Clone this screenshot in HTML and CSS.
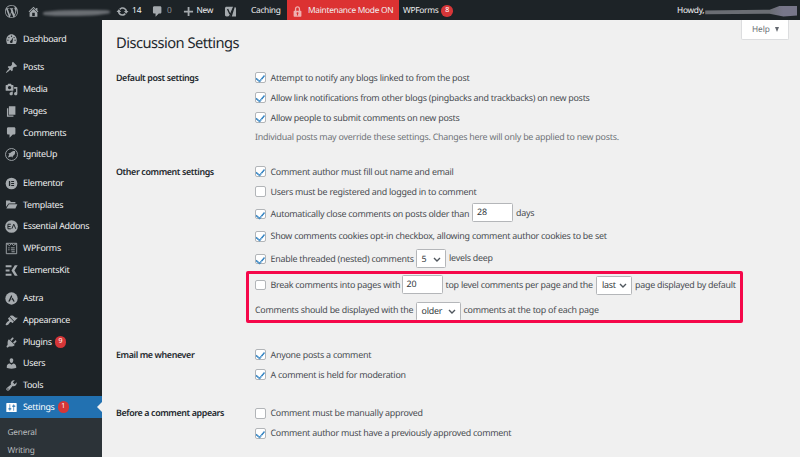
FILE: index.html
```
<!DOCTYPE html>
<html lang="en">
<head>
<meta charset="utf-8">
<title>Discussion Settings</title>
<link rel="stylesheet" href="styles.css">
</head>
<body>
<header class="bar">
  <span class="bi b-wp"><svg class="ic" viewBox="0 0 20 20"><path d="M20 10c0-5.51-4.49-10-10-10C4.48 0 0 4.49 0 10c0 5.52 4.48 10 10 10 5.51 0 10-4.48 10-10zM7.78 15.37L4.37 6.22c.55-.02 1.17-.08 1.17-.08.5-.06.44-1.13-.06-1.11 0 0-1.45.11-2.37.11-.18 0-.37 0-.58-.01C4.12 2.69 6.87 1.11 10 1.11c2.33 0 4.45.87 6.05 2.34-.68-.11-1.65.39-1.65 1.58 0 .74.45 1.36.9 2.1.35.61.55 1.36.55 2.46 0 1.49-1.4 5-1.4 5l-3.03-8.37c.54-.02.82-.17.82-.17.5-.05.44-1.25-.06-1.22 0 0-1.44.12-2.38.12-.87 0-2.33-.12-2.33-.12-.5-.03-.56 1.2-.06 1.22l.92.08 1.26 3.41zM17.41 10c.24-.64.74-1.87.43-4.25.7 1.29 1.05 2.71 1.05 4.25 0 3.29-1.73 6.24-4.4 7.78.97-2.59 1.94-5.2 2.92-7.78zM6.1 18.09C3.12 16.65 1.11 13.53 1.11 10c0-1.3.23-2.48.72-3.59C3.25 10.3 4.67 14.2 6.1 18.09zm4.03-6.63l2.58 6.98c-.86.29-1.76.45-2.71.45-.79 0-1.57-.11-2.29-.33.81-2.38 1.62-4.74 2.42-7.1z"/></svg></span>
  <span class="bi b-site"><svg class="ic" viewBox="0 0 20 20"><path d="M16 8.5l1.53 1.53-1.06 1.06L10 4.6l-6.47 6.49-1.06-1.06L10 2.5l4 4v-2h2v4zm-6-2.46l6 5.99V18H4v-5.97zM12 17v-5H8v5h4z"/></svg><i class="smear"></i></span>
  <span class="bi b-upd"><svg class="ic" viewBox="0 0 20 20"><path d="M10.2 3.28c3.53 0 6.43 2.61 6.92 6h2.08l-3.5 4-3.5-4h2.32c-.45-1.97-2.21-3.45-4.32-3.45-1.45 0-2.73.71-3.54 1.78L4.95 5.66C6.23 4.2 8.11 3.28 10.2 3.28zm-.4 13.44c-3.52 0-6.43-2.61-6.92-6H.8l3.5-4c1.17 1.33 2.33 2.67 3.5 4H5.48c.45 1.97 2.21 3.45 4.32 3.45 1.45 0 2.73-.71 3.54-1.78l1.71 1.95c-1.28 1.46-3.15 2.38-5.25 2.38z"/></svg><span>14</span></span>
  <span class="bi b-com"><svg class="ic" viewBox="0 0 20 20"><path d="M5 2h9c1.1 0 2 .9 2 2v7c0 1.1-.9 2-2 2h-2l-5 5v-5H5c-1.1 0-2-.9-2-2V4c0-1.1.9-2 2-2z"/></svg><span class="zero">0</span></span>
  <span class="bi b-new"><svg class="ic" viewBox="0 0 20 20"><path d="M8.7 3h2.8v5.7H17v2.8h-5.500V17H8.700v-5.500H3V8.700h5.700z"/></svg><span>New</span></span>
  <span class="bi b-yoast"><svg class="ic" viewBox="0 0 20 20"><path d="M4 2.500h10.500L9.500 17.500H4c-1.600 0-2.500-1-2.500-2.500V5C1.500 3.400 2.500 2.500 4 2.500zM16.500 3c1.300.3 2 1.200 2 2.500v12H12z"/><path class="yy" d="M5.500 6l3.500 8M16 .5L9 16.500c-.8 1.800-1.600 2.500-3.500 2.500"/></svg></span>
  <span class="bi b-cache">Caching</span>
  <span class="bi b-maint"><svg class="ic" viewBox="0 0 20 20"><path d="M14 9h1c.55 0 1 .45 1 1v7c0 .55-.45 1-1 1H5c-.55 0-1-.45-1-1v-7c0-.55.45-1 1-1h1V6c0-2.210 1.790-4 4-4s4 1.790 4 4v3zm-2 0V6c0-1.100-.9-2-2-2s-2 .9-2 2v3h4zm-1 7l-.36-2.150c.51-.24.86-.75.86-1.350 0-.83-.67-1.500-1.500-1.500s-1.500.67-1.500 1.500c0 .6.35 1.110.86 1.350L9 16h2z"/></svg><span>Maintenance Mode ON</span></span>
  <span class="bi b-forms">WPForms<b class="badge">8</b></span>
  <span class="bi b-howdy">Howdy,<i class="smear me"></i></span>
</header>
<div class="shell">
  <nav class="side">
    <a class="mi"><svg class="ic" viewBox="0 0 20 20"><path d="M3.760 17h12.480c1.340-1.630 1.760-3.720 1.760-6 0-5.330-3.670-9-8-9s-8 3.670-8 9c0 2.280.42 4.370 1.760 6z"/><g class="cut"><circle cx="10" cy="5" r="1"/><circle cx="6" cy="7" r="1"/><circle cx="14" cy="7" r="1"/><circle cx="4.500" cy="11" r="1"/><circle cx="15.500" cy="11" r="1"/><path d="M11.700 13a2 2 0 1 1-2.500-1.400L12.500 7z"/></g></svg>Dashboard</a>
    <i class="sep"></i>
    <a class="mi"><svg class="ic" viewBox="0 0 20 20"><path d="M10.440 3.020l1.820-1.820 6.360 6.350-1.830 1.820c-1.050-.68-2.480-.57-3.410.36l-.75.75c-.92.93-1.040 2.350-.35 3.410l-1.830 1.820-2.410-2.410-2.800 2.790c-.42.42-3.380 2.710-3.800 2.290s1.860-3.390 2.280-3.810l2.790-2.790L4.100 9.360l1.830-1.820c1.050.69 2.480.57 3.400-.36l.75-.75c.93-.92 1.050-2.350.36-3.410z"/></svg>Posts</a>
    <a class="mi"><svg class="ic" viewBox="0 0 20 20"><path fill-rule="evenodd" d="M13 11V4c0-.55-.45-1-1-1h-1.670L9 1H5L3.670 3H2c-.55 0-1 .45-1 1v7c0 .55.45 1 1 1h10c.55 0 1-.45 1-1zM7 4.500c1.380 0 2.500 1.120 2.500 2.500S8.380 9.500 7 9.500 4.500 8.380 4.500 7 5.620 4.500 7 4.500zM14 6h5v10.500c0 1.380-1.120 2.500-2.500 2.500S14 17.880 14 16.500s1.120-2.500 2.500-2.500c.17 0 .34.02.5.05V9h-3V6zm-4 8.050V13h2v3.500c0 1.380-1.120 2.500-2.500 2.500S7 17.880 7 16.500 8.120 14 9.500 14c.17 0 .34.02.5.05z"/></svg>Media</a>
    <a class="mi"><svg class="ic" viewBox="0 0 20 20"><path d="M6 15V2h10v13H6zm-1 1h8v2H3V5h2v11z"/></svg>Pages</a>
    <a class="mi"><svg class="ic" viewBox="0 0 20 20"><path d="M5 2h9c1.100 0 2 .9 2 2v7c0 1.100-.9 2-2 2h-2l-5 5v-5H5c-1.100 0-2-.9-2-2V4c0-1.100.9-2 2-2z"/></svg>Comments</a>
    <a class="mi"><svg class="ic" viewBox="0 0 20 20"><circle class="ln" cx="10" cy="10" r="9.200"/><path d="M15.500 4.500c-3.500 0-6 1-7.500 3.200L5 8.500l1.500 1.500-2 4.500 5.500-1.500 1 2 1.500-3c2.500-1.500 3.500-4 3-7.500z"/></svg>IgniteUp</a>
    <i class="sep"></i>
    <a class="mi"><svg class="ic" viewBox="0 0 20 20"><circle cx="10" cy="10" r="9"/><path class="cut" d="M6 6h2v8H6zM9.500 6H14v1.600H9.500zM9.500 9.200H14v1.600H9.500zM9.500 12.400H14V14H9.500z"/></svg>Elementor</a>
    <a class="mi"><svg class="ic" viewBox="0 0 20 20"><path d="M1.500 4h6l1.500 2h7v2.500H5.500L1.500 14zM6 9.700h13L16 16H2z"/></svg>Templates</a>
    <a class="mi"><svg class="ic" viewBox="0 0 20 20"><circle cx="10" cy="10" r="9.800"/><path class="cutln" d="M9 6.500H4.500v7H9M4.500 10H8.500M10.500 13.500l3-7 3 7"/></svg>Essential Addons</a>
    <a class="mi"><svg class="ic" viewBox="0 0 20 20"><path class="ln" d="M2 2h16v16H2zM2.500 2.500L7 5.500l3-3 3 3 4.500-3M5 9h2M9 9h6M5 12h2M9 12h6M10 15h5"/></svg>WPForms</a>
    <a class="mi"><svg class="ic" viewBox="0 0 20 20"><path d="M1 2h9v3H1zM1 8.500h6v3H1zM1 15h9v3H1zM15 2h4.500l-5 8 5 8H15l-5-8z"/></svg>ElementsKit</a>
    <i class="sep"></i>
    <a class="mi"><svg class="ic" viewBox="0 0 20 20"><circle cx="10" cy="10" r="9.500"/><path class="cut" d="M9.800 4.500L5 14.500h2.400L11 7zM11.700 8.600L9.800 12h1.800l1 2.500H15z"/></svg>Astra</a>
    <a class="mi"><svg class="ic" viewBox="0 0 20 20"><path d="M14.480 11.060L7.410 3.990l1.500-1.500c.5-.56 2.300-.47 3.510.32 1.210.8 1.430 1.280 2.910 2.100 1.180.64 2.450 1.260 4.450.85zm-.71.71L6.700 4.700 4.930 6.470c-.39.39-.39 1.020 0 1.410l1.060 1.060c.39.39.39 1.030 0 1.420-.6.6-1.430 1.110-2.210 1.690-.35.26-.7.53-1.010.84C1.430 14.230.4 16.080 1.400 17.070c.99 1 2.840-.03 4.180-1.360.31-.31.58-.66.85-1.020.57-.78 1.080-1.610 1.690-2.210.39-.39 1.020-.39 1.410 0l1.060 1.060c.39.39 1.020.39 1.410 0z"/></svg>Appearance</a>
    <a class="mi"><svg class="ic" viewBox="0 0 20 20"><path d="M13.110 4.360L9.870 7.600 8 5.730l3.240-3.240c.35-.34 1.050-.2 1.560.32.520.51.660 1.210.31 1.550zm-8 1.770l.91-1.120 9.010 9.010-1.190.84c-.71.71-2.630 1.160-3.820 1.160H6.140L4.900 17.260c-.59.59-1.540.59-2.120 0-.59-.58-.59-1.530 0-2.120l1.240-1.240v-3.880c0-1.130.4-3.190 1.090-3.890zm7.260 3.970l3.240-3.240c.34-.35 1.040-.21 1.550.31.52.51.66 1.210.31 1.550l-3.240 3.250z"/></svg>Plugins<b class="badge">9</b></a>
    <a class="mi"><svg class="ic" viewBox="0 0 20 20"><path d="M10 9.250c-2.270 0-2.730-3.440-2.730-3.440C7 4.020 7.820 2 9.970 2c2.160 0 2.980 2.020 2.710 3.810 0 0-.41 3.440-2.680 3.440zm0 2.570L12.720 10c2.390 0 4.520 2.330 4.520 4.530v2.490s-3.650 1.130-7.240 1.130c-3.650 0-7.240-1.130-7.240-1.130v-2.490c0-2.250 1.940-4.480 4.470-4.480z"/></svg>Users</a>
    <a class="mi"><svg class="ic" viewBox="0 0 20 20"><path fill-rule="evenodd" d="M16.680 9.770c-1.340 1.340-3.300 1.670-4.950.99l-5.410 6.520c-.99.99-2.590.99-3.580 0s-.99-2.590 0-3.570l6.520-5.420c-.68-1.650-.35-3.610.99-4.950 1.280-1.280 3.120-1.620 4.720-1.060l-2.890 2.890 2.820 2.820 2.860-2.870c.53 1.580.18 3.390-1.080 4.650zM3.810 16.210c.4.39 1.040.39 1.430 0 .4-.4.4-1.040 0-1.430-.39-.4-1.030-.4-1.430 0-.39.39-.39 1.030 0 1.430z"/></svg>Tools</a>
    <a class="mi on"><svg class="ic" viewBox="0 0 20 20"><path fill-rule="evenodd" d="M18 16V4c0-.55-.45-1-1-1H3c-.55 0-1 .45-1 1v12c0 .55.45 1 1 1h14c.55 0 1-.45 1-1zM8 11h1c.55 0 1 .45 1 1s-.45 1-1 1H8v1.500c0 .28-.22.5-.5.5s-.5-.22-.5-.5V13H6c-.55 0-1-.45-1-1s.45-1 1-1h1V5.500c0-.28.22-.5.5-.5s.5.22.5.5V11zm5-2h-1c-.55 0-1-.45-1-1s.45-1 1-1h1V5.500c0-.28.22-.5.5-.5s.5.22.5.5V7h1c.55 0 1 .45 1 1s-.45 1-1 1h-1v5.500c0 .28-.22.5-.5.5s-.5-.22-.5-.5V9z"/></svg>Settings<b class="badge">1</b></a>
    <div class="sub"><a>General</a><a>Writing</a></div>
  </nav>
  <main class="main">
    <div class="head"><h1>Discussion Settings</h1><span class="help">Help<i class="tri"></i></span></div>

    <section class="grp g1">
      <h2>Default post settings</h2>
      <div class="opts">
        <label class="row"><i class="cb on"></i><span>Attempt to notify any blogs linked to from the post</span></label>
        <label class="row"><i class="cb on"></i><span>Allow link notifications from other blogs (pingbacks and trackbacks) on new posts</span></label>
        <label class="row"><i class="cb on"></i><span>Allow people to submit comments on new posts</span></label>
        <p class="row desc">Individual posts may override these settings. Changes here will only be applied to new posts.</p>
      </div>
    </section>

    <section class="grp g2">
      <h2>Other comment settings</h2>
      <div class="opts">
        <label class="row"><i class="cb on"></i><span>Comment author must fill out name and email</span></label>
        <label class="row"><i class="cb"></i><span>Users must be registered and logged in to comment</span></label>
        <div class="row tall"><i class="cb on"></i><span class="w-close">Automatically close comments on posts older than</span><span class="field num up">28</span><span class="post">days</span></div>
        <label class="row mid"><i class="cb on"></i><span>Show comments cookies opt-in checkbox, allowing comment author cookies to be set</span></label>
        <div class="row tall"><i class="cb on"></i><span class="w-thread">Enable threaded (nested) comments</span><span class="field sel s5">5<svg class="chev" viewBox="0 0 8 5"><path d="M1 1l3 3 3-3"/></svg></span><span class="post">levels deep</span></div>
        <div class="mark">
          <div class="row pg"><i class="cb"></i><span class="w-break">Break comments into pages with</span><span class="field num up">20</span><span class="post w-top">top level comments per page and the</span><span class="field sel last">last<svg class="chev" viewBox="0 0 8 5"><path d="M1 1l3 3 3-3"/></svg></span><span class="post">page displayed by default</span></div>
          <div class="row ord"><span class="w-disp">Comments should be displayed with the</span><span class="field sel older">older<svg class="chev" viewBox="0 0 8 5"><path d="M1 1l3 3 3-3"/></svg></span><span class="post">comments at the top of each page</span></div>
        </div>
      </div>
    </section>

    <section class="grp g3">
      <h2>Email me whenever</h2>
      <div class="opts">
        <label class="row"><i class="cb on"></i><span>Anyone posts a comment</span></label>
        <label class="row"><i class="cb on"></i><span>A comment is held for moderation</span></label>
      </div>
    </section>

    <section class="grp g4">
      <h2>Before a comment appears</h2>
      <div class="opts">
        <label class="row"><i class="cb"></i><span>Comment must be manually approved</span></label>
        <label class="row"><i class="cb on"></i><span>Comment author must have a previously approved comment</span></label>
      </div>
    </section>
  </main>
</div>
</body>
</html>
```
FILE: styles.css
```
* { box-sizing: border-box; }
body {
  margin: 0;
  width: 800px;
  height: 457px;
  overflow: hidden;
  background: #f0f0f0;
  color: #484c50;
  font: 8.9px/1.2 "Noto Sans", sans-serif;
  letter-spacing: -.24px;
  text-rendering: geometricPrecision;
}
i { font-style: normal; }
.ic { width: 13px; height: 13px; fill: #a5aaae; flex: none; }
.ic .cut { fill: #1d2327; }
.ic .ln { fill: none; stroke: #a5aaae; stroke-width: 1.4; }
.ic .cutln { fill: none; stroke: #1d2327; stroke-width: 1.5; }

.bar {
  display: flex;
  height: 20px;
  background: #1d2327;
  color: #f0f0f1;
  font-size: 8.400px;
  letter-spacing: -.3px;
  white-space: nowrap;
}
.bi { display: flex; align-items: center; flex: none; padding-top: 2px; }
.b-wp { width: 27px; padding-left: 5px; }
.b-site { width: 88.500px; }
.smear {
  width: 67px;
  height: 6px;
  margin: 3px 0 0 3px;
  border-radius: 50% 20% 60% 30%;
  background: #6a6e73;
  filter: blur(1.2px);
}
.b-upd { width: 35px; gap: 3.500px; letter-spacing: 0; }
.b-com { width: 31px; gap: 3.500px; }
.zero { color: #8b9094; }
.b-new { width: 42px; gap: 2px; }
.b-yoast { width: 27.500px; }
.ic .yy { fill: none; stroke: #1d2327; stroke-width: 2; }
.b-cache { width: 36px; }
.b-maint { width: 112px; padding-left: 4px; gap: 4px; background: #dc3232; }
.b-maint .ic { fill: #efb0b0; }
.b-forms { width: 278px; padding-left: 4px; }
.badge {
  display: inline-flex;
  align-items: center;
  justify-content: center;
  width: 11.500px;
  height: 11.500px;
  margin-left: 3px;
  border-radius: 50%;
  background: #d63638;
  color: #fff;
  font-size: 7px;
  font-weight: 400;
  letter-spacing: 0;
}
.me {
  width: 92px;
  height: 11px;
  margin: 0 0 0 1px;
  border-radius: 0;
  background: linear-gradient(90deg, #6a6d73 70%, #77768a 85%);
  filter: none;
  clip-path: polygon(0 45%, 70% 38%, 82% 0, 100% 0, 100% 90%, 85% 100%, 70% 75%, 0 80%);
}
.b-howdy { filter: none; }

.shell { display: flex; height: 437px; }
.side { width: 102px; flex: none; padding-top: 8.300px; background: #1d2327; color: #f0f0f1; letter-spacing: -.28px; }
.mi {
  display: flex;
  align-items: center;
  height: 21.700px;
  padding-left: 5px;
  white-space: nowrap;
}
.mi .ic { margin-right: 5px; }
.sep { display: block; height: 7px; }
.mi.on {
  position: relative;
  background: #2271b1;
  color: #fff;
}
.mi.on::after {
  content: "";
  position: absolute;
  right: 0;
  top: 6px;
  border: 5px solid transparent;
  border-left-width: 0;
  border-right-color: #f0f0f0;
}
.mi.on .ic { fill: #fff; }
.sub { height: 60px; padding: 5.500px 0 0 7.500px; background: #2c3338; color: #b9bcbf; font-size: 8.300px; letter-spacing: -.2px; }
.sub a { display: flex; align-items: center; height: 18px; }

.main { flex: 1; padding-left: 14px; min-width: 0; white-space: nowrap; }
.head { display: flex; justify-content: space-between; height: 47.500px; padding-right: 11px; }
h1 { margin: 14px 0 0; font-size: 14.700px; font-weight: 400; line-height: 18px; letter-spacing: -.54px; color: #23282d; }
.help {
  display: flex;
  align-items: center;
  gap: 5px;
  width: 48px;
  height: 19.500px;
  padding: 1px 0 0 10px;
  border: 1px solid #dcdddf;
  border-top: 0;
  border-radius: 0 0 2px 2px;
  background: #fff;
  color: #6a6f74;
  font-size: 8.300px;
  letter-spacing: -.1px;
}
.tri { border: 2.900px solid transparent; border-top: 5px solid #646970; border-bottom: 0; }

.grp { display: grid; grid-template-columns: 139px 1fr; }
.g1 { height: 94px; }
.g2 { height: 183px; }
.g3 { height: 58.800px; }
h2 { margin: 0; font-size: 8.900px; font-weight: 600; line-height: 20px; letter-spacing: -.38px; color: #23282d; }
.row { display: flex; align-items: center; height: 20px; margin: 0; }
.row > span:not(.field) { position: relative; top: .4px; }
.row.desc { color: #6f7377; }
.tall { height: 24.500px; }
.mid { height: 20.500px; }
.cb {
  display: flex;
  justify-content: center;
  flex: none;
  width: 10.500px;
  height: 10.500px;
  margin-right: 5px;
  border: 1px solid #b2b5b8;
  border-radius: 2px;
  background: #fff;
}
.cb.on::after {
  content: "";
  width: 3.500px;
  height: 6.500px;
  border: solid #2c7fc0;
  border-width: 0 1.500px 1.500px 0;
  box-shadow: .5px .5px 0 #2c7fc0;
  transform: rotate(40deg);
}
.field {
  display: flex;
  align-items: center;
  flex: none;
  height: 19px;
  padding: 0 4px;
  border: 1px solid #b4b6b9;
  border-radius: 1.500px;
  background: #fff;
  color: #32373c;
}
.num { width: 41px; letter-spacing: 0; }
.up { margin-bottom: 2px; }
.sel { justify-content: space-between; padding: 1px 4px 0 5px; }
.chev { width: 8px; height: 5px; fill: none; stroke: #50575e; stroke-width: 1.400; }
.post { margin-left: 3px; padding-bottom: 1px; }
.s5 { width: 30.500px; }
.last { width: 36px; }
.older { width: 45px; margin-top: 2px; }
.w-close { width: 201.500px; }
.w-thread { width: 145px; }
.w-break { width: 131px; }
.w-top { width: 150.500px; }
.w-disp { width: 160.500px; }
.mark {
  width: 497.500px;
  height: 52px;
  margin: 0 0 0 -9.500px;
  padding: 0 0 0 6.500px;
  border: 3.200px solid #f5084a;
  border-radius: 2px;
  overflow: hidden;
}
.pg { height: 22px; }
.ord { height: 28px; }
```
